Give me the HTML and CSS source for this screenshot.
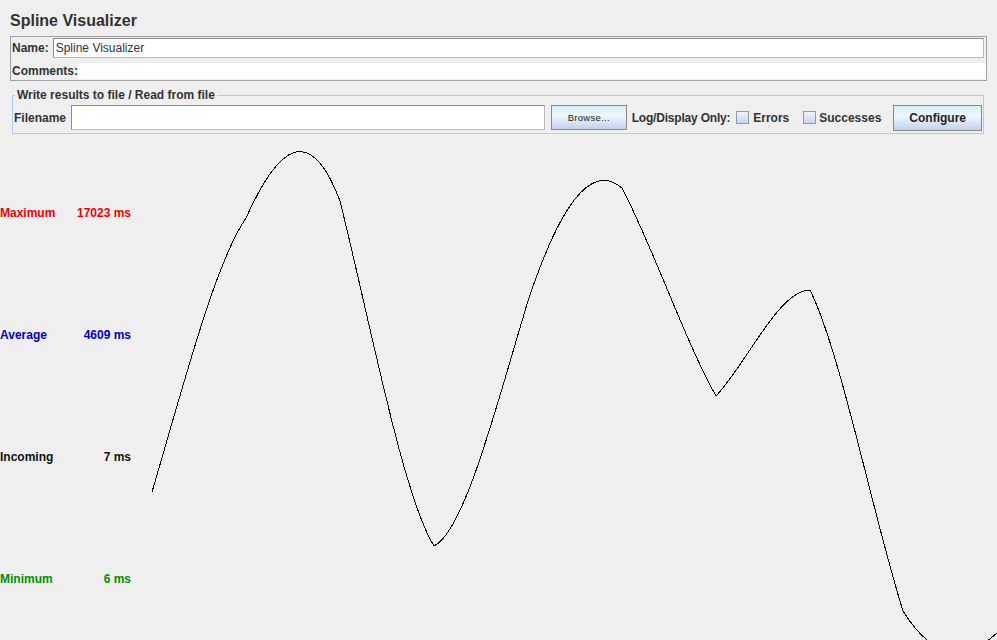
FILE: index.html
```html
<!DOCTYPE html>
<html>
<head>
<meta charset="utf-8">
<title>Spline Visualizer</title>
<link rel="stylesheet" href="styles.css">
</head>
<body>
<div class="title">Spline Visualizer</div>
<div class="name-panel">
  <div class="row">
    <span class="lbl">Name:</span>
    <div class="field">Spline Visualizer</div>
  </div>
  <div class="row row-comments">
    <span class="lbl">Comments:</span>
    <div class="comment-area"></div>
  </div>
</div>
<fieldset class="file-box">
  <legend>Write results to file / Read from file</legend>
  <div class="file-row">
    <span class="lbl fn-lbl">Filename</span>
    <div class="file-input"></div>
    <div class="btn browse">Browse...</div>
    <span class="lbl log-lbl">Log/Display Only:</span>
    <span class="check"></span><span class="lbl chk-lbl">Errors</span>
    <span class="check check2"></span><span class="lbl chk-lbl">Successes</span>
    <div class="btn configure">Configure</div>
  </div>
</fieldset>
<div class="chart">
  <div class="legend-col">
    <div class="stat max"><span>Maximum</span><span>17023 ms</span></div>
    <div class="stat avg"><span>Average</span><span>4609 ms</span></div>
    <div class="stat inc"><span>Incoming</span><span>7 ms</span></div>
    <div class="stat min"><span>Minimum</span><span>6 ms</span></div>
  </div>
  <svg class="plot" width="997" height="507" viewBox="0 133 997 507" xmlns="http://www.w3.org/2000/svg">
    <path fill="none" stroke="#000" stroke-width="1" shape-rendering="crispEdges"
      d="M152,491 C183,386 215,262 246,217
         C277,148 309,118 340,200
         C371,325 403,495 434,545
         C465,530 497,402 528,300
         C559,207 590,160 622,187
         C653,246 685,340 716,395
         C747,362 779,289 810,289
         C841,352 872,511 903,610
         C934,660 966,660 997,632"/>
  </svg>
</div>
</body>
</html>
```
FILE: styles.css
```css
html, body {
  margin: 0;
  padding: 0;
  background: #efefef;
  width: 997px;
  height: 640px;
  overflow: hidden;
  font-family: "Liberation Sans", Arial, sans-serif;
  font-size: 12px;
  color: #222;
}
.title {
  height: 36px;
  box-sizing: border-box;
  padding: 10px 0 0 10px;
  font-size: 16px;
  font-weight: bold;
  line-height: 22px;
  color: #333;
}
.lbl {
  font-weight: bold;
  color: #333;
  white-space: nowrap;
}
.name-panel {
  margin: 0 10px;
  border: 1px solid #a0a0a0;
  padding: 1px 0 0 1px;
  height: 42px;
}
.row {
  display: flex;
  align-items: center;
}
.row .lbl {
  padding-right: 4px;
}
.field {
  flex: 1;
  height: 18px;
  margin-right: 2px;
  background: #fff;
  border: 1px solid #8c8c8c;
  border-right-color: #b8b8b8;
  border-bottom-color: #b8b8b8;
  padding-left: 2px;
  line-height: 18px;
  color: #333;
  font-weight: normal;
}
.row-comments {
  margin-top: 5px;
}
.row-comments .lbl {
  padding-right: 0;
}
.comment-area {
  flex: 1;
  height: 16px;
  background: #fff;
}
.file-box {
  margin: 7px 13px 0 12px;
  padding: 2px 1px 2px 1px;
  border: 1px solid #a8cff5;
  min-width: 0;
}
.file-box legend {
  padding: 0 2px;
  margin-left: 1px;
  font-weight: bold;
  color: #333;
  line-height: 14px;
}
.file-row {
  display: flex;
  align-items: center;
  height: 27px;
}
.fn-lbl {
  width: 57px;
}
.file-input {
  width: 474px;
  height: 23px;
  background: #fff;
  border: 1px solid #8c8c8c;
  border-right-color: #b8b8b8;
  border-bottom-color: #b8b8b8;
}
.btn {
  box-sizing: border-box;
  border: 1px solid #8a8a8a;
  background: linear-gradient(to bottom, #d6eef8 0%, #eef8fc 40%, #dce8f8 65%, #c4d0ee 100%);
  display: flex;
  align-items: center;
  justify-content: center;
  color: #222;
}
.browse {
  margin-left: 6px;
  width: 76px;
  height: 25px;
  font-size: 9.5px;
  letter-spacing: 0.3px;
}
.log-lbl {
  margin-left: 5px;
  margin-right: 6px;
  letter-spacing: -0.2px;
}
.check {
  box-sizing: border-box;
  width: 13px;
  height: 13px;
  border: 1px solid #8b9bb0;
  background: linear-gradient(to bottom, #eef4fc, #c8d4ec);
  margin-right: 4px;
}
.chk-lbl {
  margin-right: 14px;
}
.check2 {
  margin-right: 3px;
}
.configure {
  margin-left: -2px;
  width: 89px;
  height: 26px;
  font-weight: bold;
  font-size: 12px;
}
.chart {
  display: grid;
  grid-template-columns: 997px;
  grid-template-rows: 507px;
}
.legend-col, .plot {
  grid-area: 1 / 1;
}
.legend-col {
  width: 131px;
  display: flex;
  flex-direction: column;
  gap: 108px;
  padding-top: 72px;
}
.stat {
  display: flex;
  justify-content: space-between;
  font-weight: bold;
  line-height: 14px;
  height: 14px;
}
.max { color: #ee0000; }
.avg { color: #0000cc; }
.inc { color: #111; }
.min { color: #008f00; }
.plot {
  display: block;
}
```
